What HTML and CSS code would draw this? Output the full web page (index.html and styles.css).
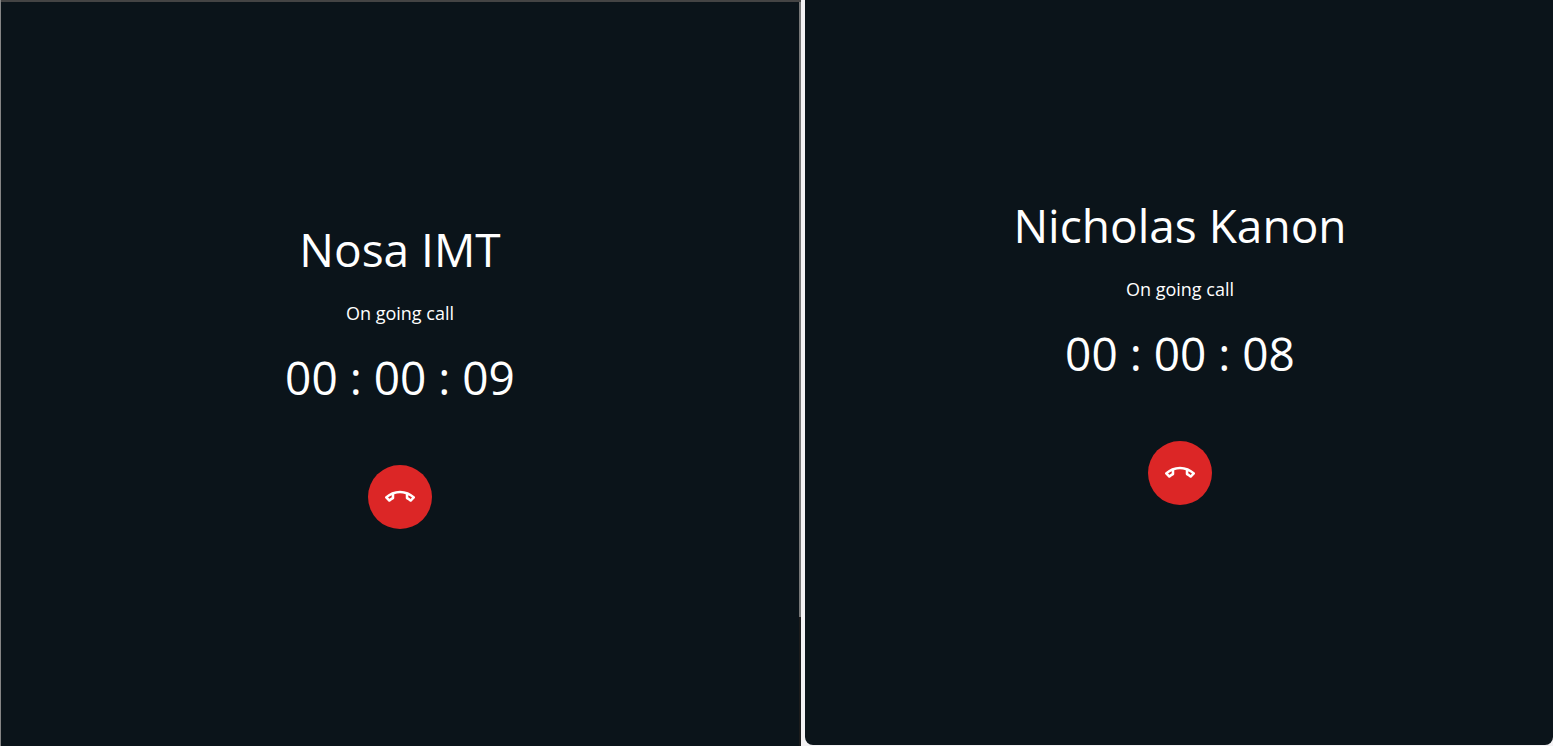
FILE: index.html
```html
<!DOCTYPE html>
<html lang="en">
<head>
<meta charset="utf-8">
<title>On going call</title>
<link rel="stylesheet" href="styles.css">
</head>
<body>
<svg class="defs" aria-hidden="true">
  <symbol id="call-end" viewBox="0 0 24 24">
    <path d="M18.59 10.52c1.05.51 2.04 1.15 2.96 1.91l-1.07 1.07c-.58-.47-1.21-.89-1.88-1.27v-1.71m-13.2 0v1.7c-.65.37-1.28.79-1.87 1.27l-1.07-1.07c.91-.75 1.9-1.38 2.94-1.9M12 7C7.46 7 3.34 8.78.29 11.67c-.18.18-.29.43-.29.71s.11.53.29.7l2.48 2.48c.18.18.43.29.71.29.27 0 .52-.1.7-.28.79-.73 1.68-1.36 2.66-1.85.33-.16.56-.51.56-.9v-3.1C8.85 9.25 10.4 9 12 9s3.15.25 4.6.72v3.1c0 .4.23.74.56.9.98.49 1.88 1.11 2.67 1.85.18.17.43.28.7.28.28 0 .53-.11.71-.29l2.48-2.48c.18-.18.29-.43.29-.71s-.11-.53-.29-.7C20.66 8.78 16.54 7 12 7z"/>
  </symbol>
</svg>
<main class="screens">
  <section class="call call-framed">
    <h1 class="name">Nosa IMT</h1>
    <p class="status">On going call</p>
    <p class="timer">00 : 00 : 09</p>
    <button class="hang-up" type="button" aria-label="End call"><svg class="icon"><use href="#call-end"/></svg></button>
  </section>
  <section class="call call-rounded">
    <h1 class="name">Nicholas Kanon</h1>
    <p class="status">On going call</p>
    <p class="timer">00 : 00 : 08</p>
    <button class="hang-up" type="button" aria-label="End call"><svg class="icon"><use href="#call-end"/></svg></button>
  </section>
</main>
</body>
</html>
```
FILE: styles.css
```css
* { box-sizing: border-box; margin: 0; }
body {
  background: #f3f2f4;
  color: #fff;
  font-family: "Open Sans", "Noto Sans", sans-serif;
}
.defs { display: none; }
.screens {
  display: grid;
  grid-template-columns: 801fr 748fr;
  gap: 4px;
  min-height: 100vh;
}
.call {
  display: flex;
  flex-direction: column;
  align-items: center;
  justify-content: center;
  background: #0b141a;
}
.call-framed {
  padding-top: 8px;
  padding-right: 2px;
  border-left: 1px solid #858585;
  background:
    linear-gradient(#444, #444) top / 100% 2px no-repeat,
    linear-gradient(#777 617px, #1c1c1c 617px) right / 2px 100% no-repeat,
    #0b141a;
}
.call-rounded {
  margin-bottom: 1px;
  padding-bottom: 40px;
  padding-left: 2px;
  border-radius: 0 0 8px 8px;
}
.name, .timer {
  font-size: 46px;
  font-weight: 400;
  line-height: 48px;
}
.status {
  margin: 26px 0;
  font-size: 18px;
  line-height: 28px;
}
.hang-up {
  display: grid;
  place-items: center;
  width: 64px;
  height: 64px;
  margin-top: 64px;
  padding: 0;
  border: 0;
  border-radius: 50%;
  background: #dc2626;
  color: #fff;
  cursor: pointer;
}
.icon { width: 30px; height: 30px; fill: currentColor; }
```
